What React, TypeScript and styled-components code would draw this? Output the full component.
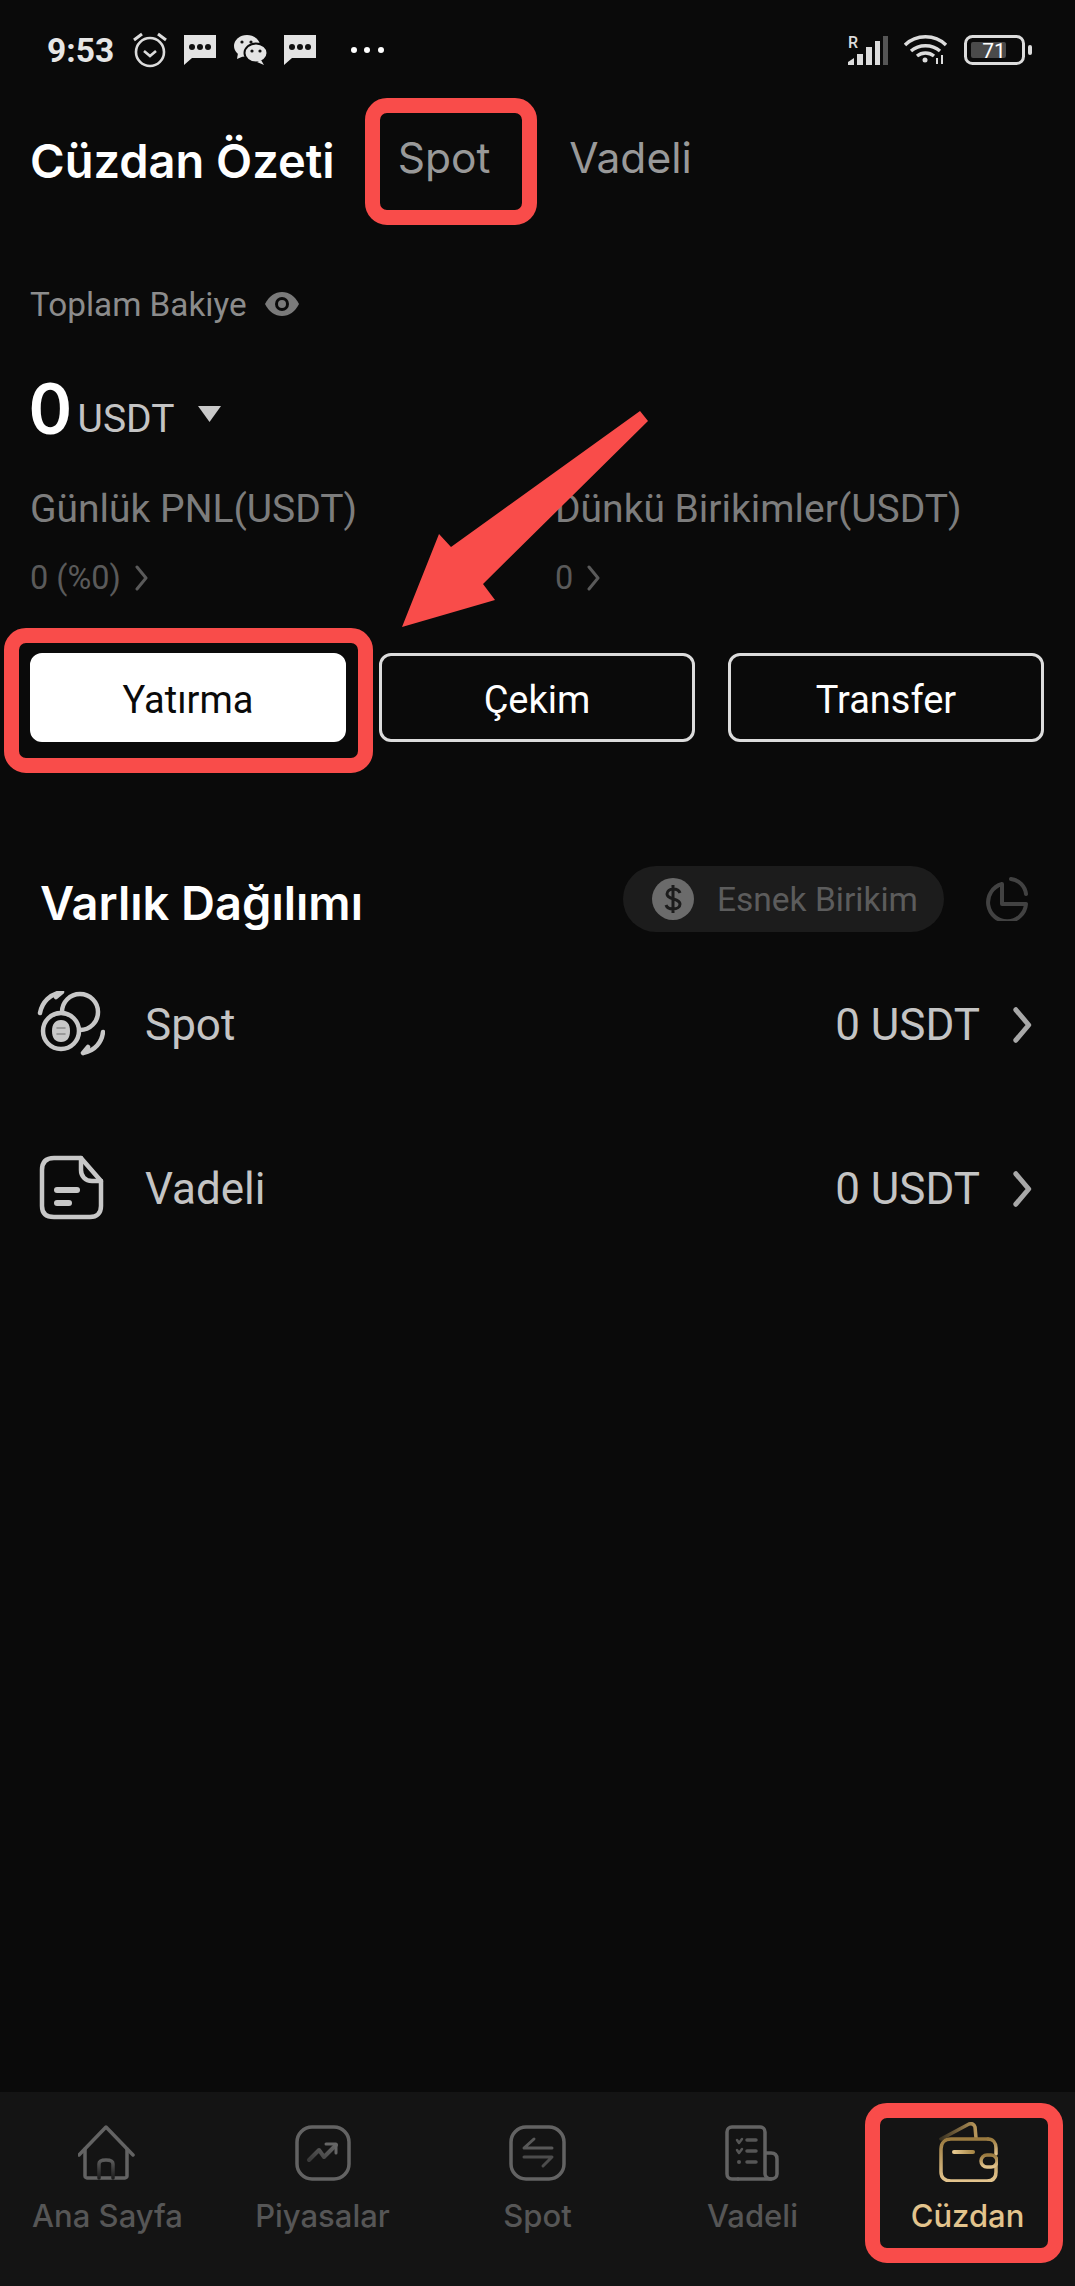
import React from "react";
import styled, { createGlobalStyle } from "styled-components";

const Global = createGlobalStyle`
  html, body { margin: 0; padding: 0; background: #0a0a0a; }
  * { box-sizing: border-box; }
`;

const Page = styled.div`
  position: relative;
  width: 1075px;
  height: 2286px;
  overflow: hidden;
  background: #0a0a0a;
  display: flex;
  flex-direction: column;
  font-family: Roboto, sans-serif;
`;

const StatusBar = styled.div`
  height: 100px;
  flex: none;
  display: flex;
  align-items: center;
  justify-content: space-between;
  padding: 0 43px 0 47px;
`;
const StatusGroup = styled.div`
  display: flex;
  align-items: center;
`;
const Clock = styled.span`
  font-size: 33.500px;
  font-weight: 700;
  color: #e6e6e6;
  margin-right: 18px;
`;
const Main = styled.main`
  flex: 1;
  display: flex;
  flex-direction: column;
`;
const Header = styled.header`
  height: 120px;
  padding: 0 30px;
  display: flex;
  align-items: center;
`;
const Title = styled.h1`
  margin: 0 63px 0 0;
  font: 600 47px Inter, sans-serif;
  color: #fff;
`;
const Tab = styled.span`
  font: 400 42.500px Inter, sans-serif;
  color: #999;
  margin-right: 79px;
  position: relative;
  top: -3px;
`;
const Summary = styled.section`
  padding: 62px 31px 0 30px;
`;
const LabelRow = styled.div`
  height: 44px;
  display: flex;
  align-items: center;
  gap: 18px;
  font-size: 33.300px;
  color: #8c8c8c;
`;
const AmountRow = styled.div`
  margin-top: 46px;
  height: 70px;
  display: flex;
  align-items: center;
`;
const Amount = styled.span`
  font: 700 70px Lato, sans-serif;
  color: #fff;
  margin-right: 7px;
`;
const Unit = styled.span`
  font-size: 39px;
  color: #c4c4c4;
  margin-top: 24px;
  margin-right: 24px;
`;
const CaretBox = styled.span`
  display: flex;
  margin-top: 14px;
`;
const Stats = styled.div`
  margin-top: 45px;
  display: grid;
  grid-template-columns: 525px 1fr;
`;
const StatTitle = styled.div`
  height: 44px;
  line-height: 44px;
  font-size: 39px;
  color: #7d7d7d;
`;
const StatValue = styled.div`
  margin-top: 27px;
  height: 40px;
  display: flex;
  align-items: center;
  gap: 14px;
  font-size: 32.500px;
  color: #5a5a5a;
`;
const Buttons = styled.div`
  margin-top: 55px;
  display: grid;
  grid-template-columns: repeat(3, 316px);
  justify-content: space-between;
`;
const Button = styled.button<{ $primary?: boolean }>`
  height: 89px;
  border-radius: 12px;
  border: 3px solid ${(p) => (p.$primary ? "#fff" : "#dcdcdc")};
  background: ${(p) => (p.$primary ? "#fff" : "#0a0a0a")};
  color: ${(p) => (p.$primary ? "#0a0a0a" : "#fff")};
  font: 400 38px Roboto, sans-serif;
  padding: 5px 0 0;
`;
const SectionHead = styled.div`
  margin-top: 124px;
  height: 66px;
  padding: 0 47px 0 40px;
  display: flex;
  align-items: center;
`;
const SectionTitle = styled.h2`
  margin: 0 auto 0 0;
  font: 600 47px Inter, sans-serif;
  color: #fff;
  position: relative;
  top: 3px;
`;
const Pill = styled.div`
  width: 321px;
  height: 66px;
  border-radius: 33px;
  background: #1c1c1c;
  display: flex;
  align-items: center;
  gap: 23px;
  padding-left: 29px;
  margin-right: 40px;
  font-size: 33.500px;
  color: #5c5c5c;
`;
const Rows = styled.div`
  margin-top: 11px;
  padding: 0 42px 0 37px;
`;
const Row = styled.div`
  height: 164px;
  display: flex;
  align-items: center;
`;
const RowIcon = styled.div`
  width: 68px;
  height: 68px;
  flex: none;
  margin-right: 40px;
`;
const RowLabel = styled.span`
  font-size: 44px;
  color: #c4c4c4;
  margin-right: auto;
`;
const RowValue = styled.span`
  font-size: 44px;
  color: #c4c4c4;
  margin-right: 33px;
`;
const Nav = styled.nav`
  height: 194px;
  flex: none;
  background: #141414;
  display: grid;
  grid-template-columns: repeat(5, 1fr);
`;
const NavItem = styled.div<{ $active?: boolean }>`
  padding-top: 30px;
  display: flex;
  flex-direction: column;
  align-items: center;
  font: 500 31px Inter, sans-serif;
  color: ${(p) => (p.$active ? "#e3c48d" : "#565656")};
`;
const NavLabel = styled.span`
  margin-top: 16px;
  line-height: 36px;
`;

const RedBox = styled.div<{ $x: number; $y: number; $w: number; $h: number }>`
  position: absolute;
  left: ${(p) => p.$x}px;
  top: ${(p) => p.$y}px;
  width: ${(p) => p.$w}px;
  height: ${(p) => p.$h}px;
  border: 15px solid #f94c4a;
  border-radius: 22px;
  pointer-events: none;
`;
const ArrowSvg = styled.svg`
  position: absolute;
  left: 0;
  top: 0;
  pointer-events: none;
`;

const Chevron = ({ w = 14, h = 26, color = "#5a5a5a", sw = 3 }: { w?: number; h?: number; color?: string; sw?: number }) => (
  <svg width={w} height={h} viewBox="0 0 14 26" fill="none" preserveAspectRatio="none">
    <path d="M2 2l9 11-9 11" stroke={color} strokeWidth={sw} strokeLinecap="round" strokeLinejoin="round" vectorEffect="non-scaling-stroke" />
  </svg>
);

const Bubble = () => (
  <svg width="34" height="32" viewBox="0 0 34 32" style={{ marginRight: 16 }}>
    <path d="M1 1h32v23H9L1 31z" fill="#e4e4e4" />
    <circle cx="9" cy="13" r="3" fill="#111" />
    <circle cx="17" cy="13" r="3" fill="#111" />
    <circle cx="25" cy="13" r="3" fill="#111" />
  </svg>
);

const StatusLeftIcons = () => (
  <>
    <svg width="36" height="36" viewBox="0 0 36 36" fill="none" stroke="#dcdcdc" style={{ marginRight: 15 }}>
      <circle cx="18" cy="20" r="14" strokeWidth="2.600" />
      <path d="M12 19l6 5 6-5" strokeWidth="2.600" />
      <path d="M2 8l8-6M34 8l-8-6" strokeWidth="3" />
    </svg>
    <Bubble />
    <svg width="34" height="30" viewBox="0 0 34 30" style={{ marginRight: 16 }}>
      <ellipse cx="14" cy="11" rx="13" ry="11" fill="#e4e4e4" />
      <path d="M5 18l-1 6 7-3z" fill="#e4e4e4" />
      <ellipse cx="23" cy="18" rx="11.500" ry="9.500" fill="#e4e4e4" stroke="#0a0a0a" strokeWidth="2" />
      <path d="M28 25l3 5-7-3z" fill="#e4e4e4" />
      <circle cx="9" cy="7" r="1.600" fill="#111" />
      <circle cx="18" cy="7" r="1.600" fill="#111" />
      <circle cx="19" cy="16" r="1.600" fill="#111" />
      <circle cx="27" cy="16" r="1.600" fill="#111" />
    </svg>
    <Bubble />
    <svg width="36" height="8" viewBox="0 0 36 8" style={{ marginLeft: 16 }}>
      <circle cx="5" cy="4" r="3" fill="#fff" />
      <circle cx="18" cy="4" r="3" fill="#fff" />
      <circle cx="32" cy="4" r="3" fill="#fff" />
    </svg>
  </>
);

const StatusRightIcons = () => (
  <>
    <svg width="42" height="36" viewBox="0 -6 42 36" style={{ marginRight: 15, marginTop: -6 }}>
      <text x="1" y="13" fontSize="16" fontWeight="500" fontFamily="Roboto, sans-serif" fill="#dcdcdc">R</text>
      <path d="M1 30v-3l6-4v7z" fill="#dcdcdc" />
      <rect x="10" y="19" width="6" height="11" fill="#dcdcdc" />
      <rect x="19" y="12" width="6" height="18" fill="#dcdcdc" />
      <rect x="28" y="6" width="5" height="24" fill="#dcdcdc" />
      <rect x="36" y="1" width="5" height="29" fill="#555" />
    </svg>
    <svg width="44" height="32" viewBox="0 0 44 32" fill="none" stroke="#dcdcdc" strokeWidth="3.400" style={{ marginRight: 16 }}>
      <path d="M1 11c11-11 30-11 41 0" />
      <path d="M7 17c8-7 21-7 29 0" />
      <path d="M13 22c5-4 12-4 17 0" />
      <circle cx="21" cy="26" r="2.500" fill="#dcdcdc" stroke="none" />
      <path d="M33 24v6M38 21v9" strokeWidth="2" />
    </svg>
    <svg width="68" height="30" viewBox="0 0 68 30">
      <rect x="1.500" y="1.500" width="58" height="27" rx="7" fill="none" stroke="#dcdcdc" strokeWidth="3" />
      <rect x="7" y="7" width="35" height="16" rx="2" fill="#4a4a4a" />
      <text x="30" y="23" textAnchor="middle" fontSize="21" fontFamily="Roboto, sans-serif" fill="#fff">71</text>
      <rect x="64" y="10" width="4" height="10" rx="2" fill="#dcdcdc" />
    </svg>
  </>
);

const Eye = () => (
  <svg width="34" height="26" viewBox="0 0 34 26">
    <path d="M0 13C4 5 10 1 17 1s13 4 17 12c-4 8-10 12-17 12S4 21 0 13z" fill="#7a7a7a" />
    <circle cx="17" cy="13" r="7" fill="#0a0a0a" />
    <circle cx="17" cy="13" r="4" fill="#7a7a7a" />
  </svg>
);
const Caret = () => (
  <svg width="23" height="16" viewBox="0 0 23 16">
    <path d="M0 0h23L11.500 16z" fill="#c9c9c9" />
  </svg>
);
const Dollar = () => (
  <svg width="42" height="42" viewBox="0 0 42 42" style={{ flex: "none" }}>
    <circle cx="21" cy="21" r="21" fill="#6b6b6b" />
    <path d="M28 15c-1-3-4-4-7-4s-6 2-6 5c0 6 13 4 13 10 0 3-3 5-7 5s-6-1-7-4M21 7v28" fill="none" stroke="#1c1c1c" strokeWidth="3" />
  </svg>
);
const Pie = () => (
  <svg width="44" height="44" viewBox="0 0 44 44" fill="none" stroke="#424242" strokeWidth="4">
    <path d="M18 7a19 19 0 1 0 24 20H18z" strokeLinejoin="round" />
    <path d="M27 2a17 17 0 0 1 15 15" strokeLinecap="round" />
  </svg>
);
const SpotIcon = () => (
  <svg width="68" height="68" viewBox="0 0 68 68" fill="none" stroke="#c8c8c8" strokeWidth="4.500" strokeLinecap="round" strokeLinejoin="round">
    <circle cx="43" cy="21" r="18" />
    <circle cx="24" cy="40" r="18" fill="#0a0a0a" />
    <path d="M3 22C5 11 13 3 25 1M25 1l-6 5" />
    <path d="M66 41c-1 10-8 19-20 21M46 62l5-6" />
    <path d="M24 29c6 0 9 4 9 11s-3 11-9 11-9-4-9-11 3-11 9-11z" fill="#c8c8c8" stroke="none" />
    <path d="M20 37h8M20 43h8" stroke="#8a8a8a" strokeWidth="1.500" />
  </svg>
);
const FileIcon = () => (
  <svg width="68" height="68" viewBox="0 2 68 68" fill="none" stroke="#c8c8c8" strokeWidth="4.500" strokeLinejoin="round" strokeLinecap="round">
    <path d="M44 5H17C9 5 5 9 5 17v36c0 7 4 11 12 11h36c7 0 11-4 11-11V28L44 5z" />
    <path d="M44 5v12c0 6 4 11 11 11h9" />
    <path d="M20 37h20" strokeWidth="6" />
    <path d="M20 50h12" strokeWidth="6" />
  </svg>
);

const NavSvg = ({ children }: { children: React.ReactNode }) => (
  <svg width="60" height="60" viewBox="0 0 60 60" fill="none" stroke="#636363" strokeWidth="3.500" strokeLinecap="round" strokeLinejoin="round">
    {children}
  </svg>
);

const Gradients = () => (
  <svg width="0" height="0" style={{ position: "absolute" }}>
    <defs>
      <linearGradient id="gold" x1="0" y1="0" x2="0" y2="1">
        <stop offset="0" stopColor="#9a7a3f" />
        <stop offset="1" stopColor="#e3c48d" />
      </linearGradient>
      <linearGradient id="goldH" gradientUnits="userSpaceOnUse" x1="16" y1="0" x2="35" y2="0">
        <stop offset="0" stopColor="#e6c88f" />
        <stop offset="1" stopColor="#a88848" />
      </linearGradient>
      <linearGradient id="flap" x1="0" y1="0" x2="1" y2="0">
        <stop offset="0" stopColor="#3a3222" />
        <stop offset="1" stopColor="#b8975a" />
      </linearGradient>
      <linearGradient id="fadeV" x1="0" y1="0" x2="0" y2="1">
        <stop offset="0" stopColor="#5c5c5c" />
        <stop offset="1" stopColor="#1e1e1e" />
      </linearGradient>
      <linearGradient id="fadeD" x1="0" y1="1" x2="1" y2="0">
        <stop offset="0" stopColor="#3a3a3a" />
        <stop offset="1" stopColor="#666" />
      </linearGradient>
    </defs>
  </svg>
);

const navIcons = [
  <NavSvg key="home">
    <path d="M1 33L28 5l27 28" />
    <path d="M7 27v27c0 1 1 2 2 2h38c1 0 2-1 2-2V27" />
    <path d="M21 56V42c0-2 2-4 7-4s7 2 7 4v14" stroke="url(#fadeV)" />
  </NavSvg>,
  <NavSvg key="market">
    <rect x="4" y="5" width="52" height="52" rx="15" />
    <path d="M16 38l10-10 5 7 12-12" stroke="url(#fadeD)" strokeWidth="4" />
    <path d="M33 22h10v9" stroke="#666" strokeWidth="3" />
  </NavSvg>,
  <NavSvg key="spot">
    <rect x="3" y="5" width="53" height="52" rx="15" />
    <path d="M26 17l-10 9h28" stroke="#585858" strokeWidth="3" />
    <path d="M16 35h28l-9 9" stroke="#4c4c4c" strokeWidth="3" />
  </NavSvg>,
  <NavSvg key="orders">
    <path d="M15 57H9c-3 0-5-2-5-5V10c0-3 2-5 5-5h28c3 0 5 2 5 5v42c0 2 2 5 6 5 3 0 6-2 6-5V37c0-4-2-6-6-6h-6" />
    <path d="M15 57h33" />
    <path d="M14 18l2 3 3-4M14 28l2 3 3-4" stroke="#565656" strokeWidth="2.500" />
    <circle cx="16" cy="40" r="2" fill="#565656" stroke="none" />
    <path d="M24 18h9M24 29h9M24 40h9" stroke="#565656" strokeWidth="3.500" />
  </NavSvg>,
  <svg key="wallet" width="60" height="60" viewBox="0 0 60 60" fill="none" strokeWidth="3.500" strokeLinecap="round" strokeLinejoin="round">
    <path d="M3 17L31 2c3-1 5 0 6 3l1 11" stroke="url(#flap)" />
    <path d="M50 17H13C7 17 3 21 3 27v23c0 6 4 9 10 9h36c6 0 9-3 9-9v-7" stroke="url(#gold)" />
    <path d="M50 17c5 0 8 4 8 9v6" stroke="url(#gold)" />
    <rect x="43" y="33" width="16" height="12" rx="6" stroke="url(#gold)" />
    <path d="M16 30h19" stroke="url(#goldH)" strokeWidth="4" />
  </svg>,
];

const navLabels = ["Ana Sayfa", "Piyasalar", "Spot", "Vadeli", "Cüzdan"];

export default function App() {
  return (
    <Page>
      <Global />
      <Gradients />
      <StatusBar>
        <StatusGroup>
          <Clock>9:53</Clock>
          <StatusLeftIcons />
        </StatusGroup>
        <StatusGroup>
          <StatusRightIcons />
        </StatusGroup>
      </StatusBar>
      <Main>
        <Header>
          <Title>Cüzdan Özeti</Title>
          <Tab>Spot</Tab>
          <Tab>Vadeli</Tab>
        </Header>
        <Summary>
          <LabelRow>
            Toplam Bakiye
            <Eye />
          </LabelRow>
          <AmountRow>
            <Amount>0</Amount>
            <Unit>USDT</Unit>
            <CaretBox>
              <Caret />
            </CaretBox>
          </AmountRow>
          <Stats>
            <div>
              <StatTitle>Günlük PNL(USDT)</StatTitle>
              <StatValue>
                0 (%0) <Chevron />
              </StatValue>
            </div>
            <div>
              <StatTitle>Dünkü Birikimler(USDT)</StatTitle>
              <StatValue>
                0 <Chevron />
              </StatValue>
            </div>
          </Stats>
          <Buttons>
            <Button $primary>Yatırma</Button>
            <Button>Çekim</Button>
            <Button>Transfer</Button>
          </Buttons>
        </Summary>
        <SectionHead>
          <SectionTitle>Varlık Dağılımı</SectionTitle>
          <Pill>
            <Dollar />
            Esnek Birikim
          </Pill>
          <Pie />
        </SectionHead>
        <Rows>
          <Row>
            <RowIcon>
              <SpotIcon />
            </RowIcon>
            <RowLabel>Spot</RowLabel>
            <RowValue>0 USDT</RowValue>
            <Chevron w={20} h={36} color="#a8a8a8" sw={5} />
          </Row>
          <Row>
            <RowIcon>
              <FileIcon />
            </RowIcon>
            <RowLabel>Vadeli</RowLabel>
            <RowValue>0 USDT</RowValue>
            <Chevron w={20} h={36} color="#a8a8a8" sw={5} />
          </Row>
        </Rows>
      </Main>
      <Nav>
        {navLabels.map((label, i) => (
          <NavItem key={label} $active={i === 4}>
            {navIcons[i]}
            <NavLabel>{label}</NavLabel>
          </NavItem>
        ))}
      </Nav>
      <RedBox $x={365} $y={98} $w={172} $h={127} />
      <RedBox $x={4} $y={628} $w={369} $h={145} />
      <RedBox $x={865} $y={2103} $w={198} $h={160} />
      <ArrowSvg width="1075" height="2286" viewBox="0 0 1075 2286">
        <path d="M402 627L439 534L451 547L640 411L648 421L483 584L495 600Z" fill="#f94c4a" />
      </ArrowSvg>
    </Page>
  );
}
